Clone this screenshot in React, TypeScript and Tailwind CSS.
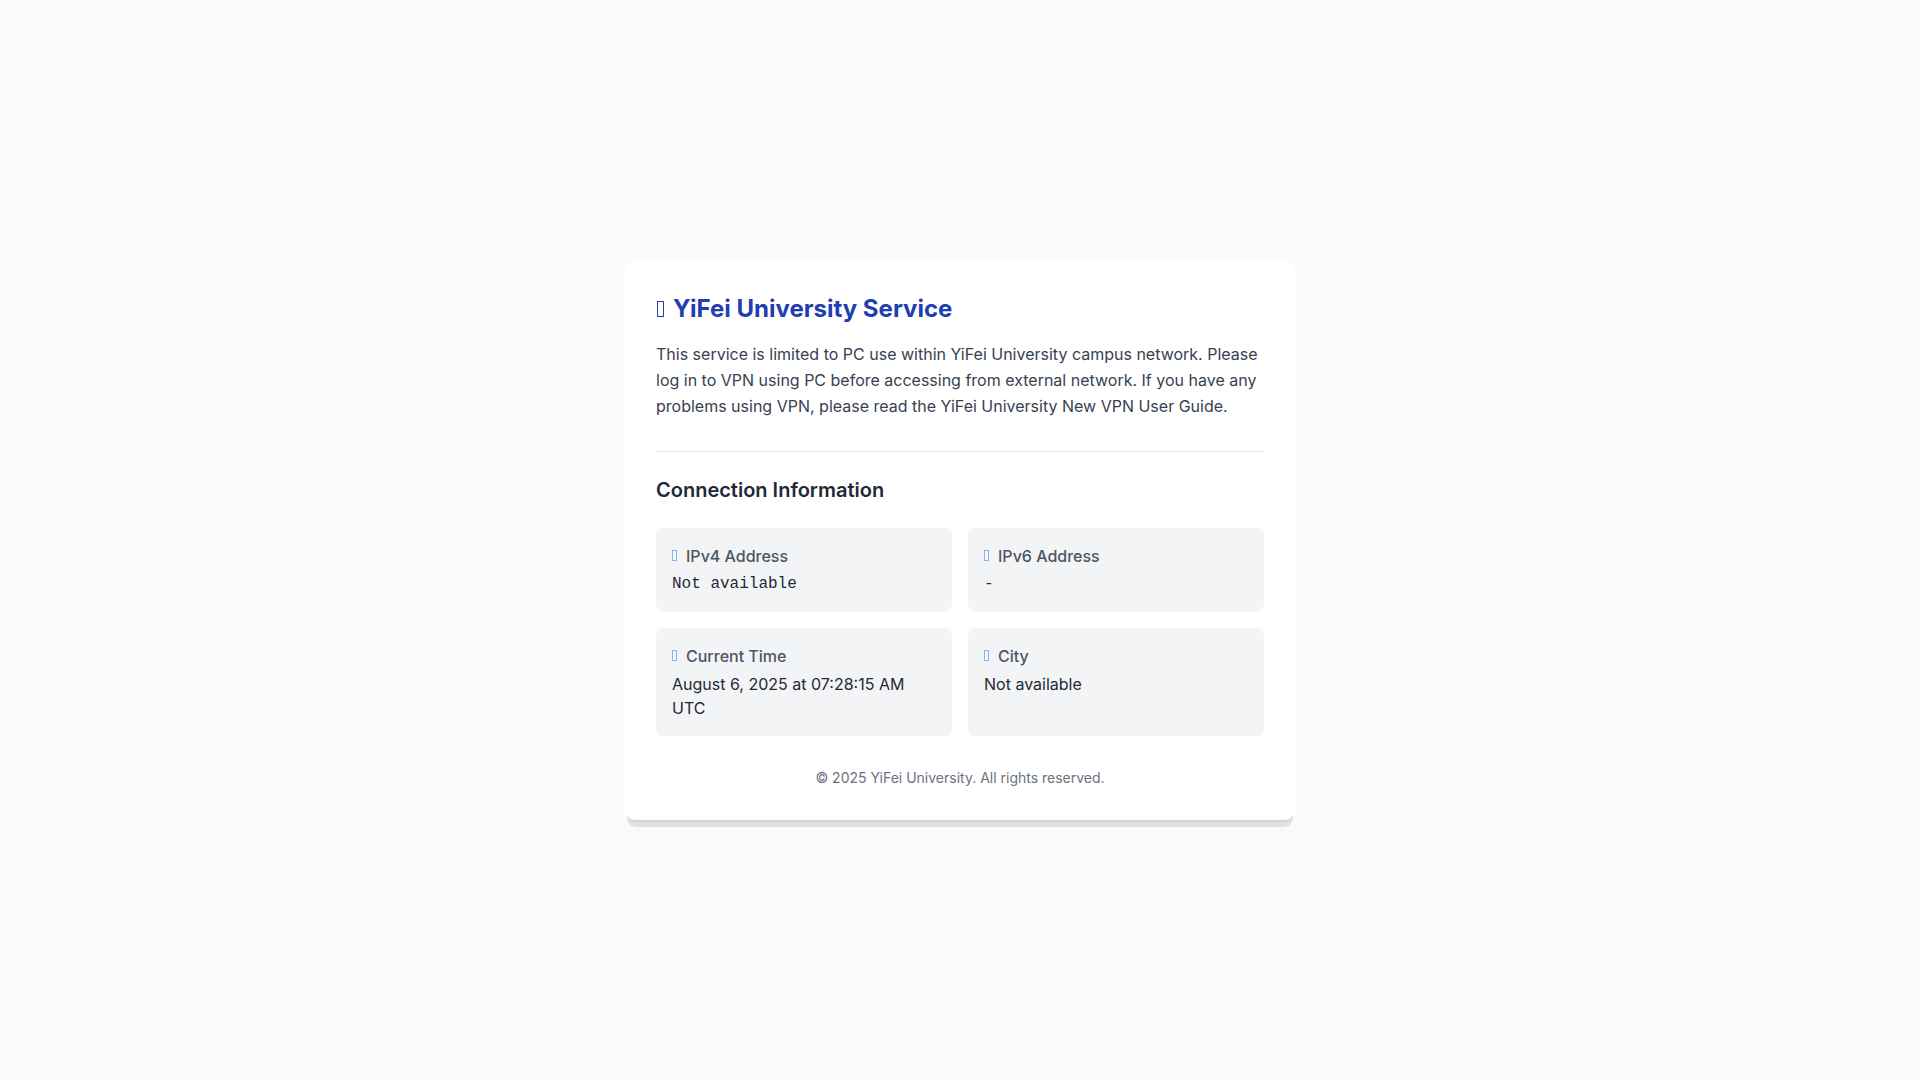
const details = [
  { label: "IPv4 Address", value: "Not available", mono: true },
  { label: "IPv6 Address", value: "-", mono: true },
  { label: "Current Time", value: "August 6, 2025 at 07:28:15 AM UTC", mono: false },
  { label: "City", value: "Not available", mono: false },
];

export default function App() {
  return (
    <div className="min-h-screen flex items-center justify-center p-4 bg-[#f9fafb] font-['Inter',sans-serif]">
      <main className="w-full max-w-2xl p-8 bg-white rounded-xl shadow-[0_10px_0_-3px_rgba(0,0,0,0.1),0_4px_0_-2px_rgba(0,0,0,0.05)]">
        <h1 className="flex items-center gap-[9px] mb-4 text-2xl font-bold text-[#1e40af]">
          <span className="w-[7px] h-4 ml-px border border-current" aria-hidden="true" />
          YiFei University Service
        </h1>
        <p className="mb-8 leading-relaxed text-[#374151]">
          This service is limited to PC use within YiFei University campus network. Please log in to VPN using PC before
          accessing from external network. If you have any problems using VPN, please read the YiFei University New VPN
          User Guide.
        </p>

        <section className="pt-6 border-t border-[#e5e7eb]">
          <h2 className="mb-6 text-xl font-semibold text-[#1f2937]">Connection Information</h2>
          <div className="grid grid-cols-1 md:grid-cols-2 gap-4">
            {details.map((item) => (
              <div key={item.label} className="p-4 rounded-lg bg-[#f3f4f6]">
                <h3 className="flex items-center gap-[9px] mb-1 font-medium text-[#4b5563]">
                  <span className="w-[5px] h-[11px] border border-[#8ab4fa]" aria-hidden="true" />
                  {item.label}
                </h3>
                <p className={item.mono ? "text-[#1f2937] font-['Liberation_Mono',monospace]" : "text-[#1f2937]"}>{item.value}</p>
              </div>
            ))}
          </div>
        </section>

        <footer className="mt-8 text-center text-sm text-[#6b7280]">© 2025 YiFei University. All rights reserved.</footer>
      </main>
    </div>
  );
}
